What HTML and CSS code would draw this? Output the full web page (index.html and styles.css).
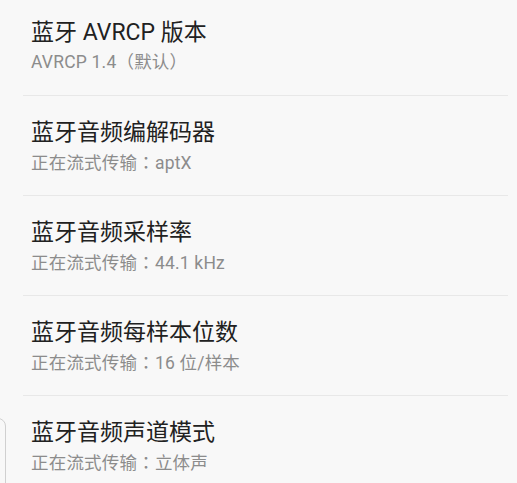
FILE: index.html
```html
<!DOCTYPE html>
<html lang="zh-CN">
<head>
  <meta charset="UTF-8">
  <title>开发者选项</title>
  <link rel="stylesheet" href="styles.css">
</head>
<body>

<div class="settings-list">
  <div class="item">
    <div class="title">蓝牙 AVRCP 版本</div>
    <div class="summary">AVRCP 1.4（默认）</div>
  </div>
  <div class="item">
    <div class="title">蓝牙音频编解码器</div>
    <div class="summary">正在流式传输<span class="colon" lang="ja">：</span>aptX</div>
  </div>
  <div class="item">
    <div class="title">蓝牙音频采样率</div>
    <div class="summary">正在流式传输<span class="colon" lang="ja">：</span>44.1 kHz</div>
  </div>
  <div class="item">
    <div class="title">蓝牙音频每样本位数</div>
    <div class="summary">正在流式传输<span class="colon" lang="ja">：</span>16 位/样本</div>
  </div>
  <div class="item">
    <div class="title">蓝牙音频声道模式</div>
    <div class="summary">正在流式传输<span class="colon" lang="ja">：</span>立体声</div>
  </div>
</div>

<div class="edge-card"></div>

</body>
</html>
```
FILE: styles.css
```css
body {
  margin: 0;
  background: #f8f8f8;
  font-family: Roboto, "Noto Sans CJK SC", sans-serif;
  overflow: hidden;
  height: 483px;
  position: relative;
}

.settings-list {
  margin-top: -4px;
  padding-left: 23px;
  padding-right: 9px;
}

.item {
  border-bottom: 1px solid #e8e8e8;
  padding-left: 8px;
  padding-top: 22px;
  height: 77px;
}

.title {
  font-size: 23px;
  line-height: 30px;
  color: #212121;
}

.summary {
  font-size: 17.5px;
  line-height: 24px;
  color: #8c8c8c;
  margin-top: 2px;
  letter-spacing: 0.2px;
}

.colon {
  font-family: "Noto Sans CJK JP", sans-serif;
}

/* edge of a card peeking in at the bottom left */
.edge-card {
  position: absolute;
  left: -20px;
  top: 418px;
  width: 24px;
  height: 100px;
  border: 1px solid #d0d0d0;
  border-radius: 8px;
}
```
